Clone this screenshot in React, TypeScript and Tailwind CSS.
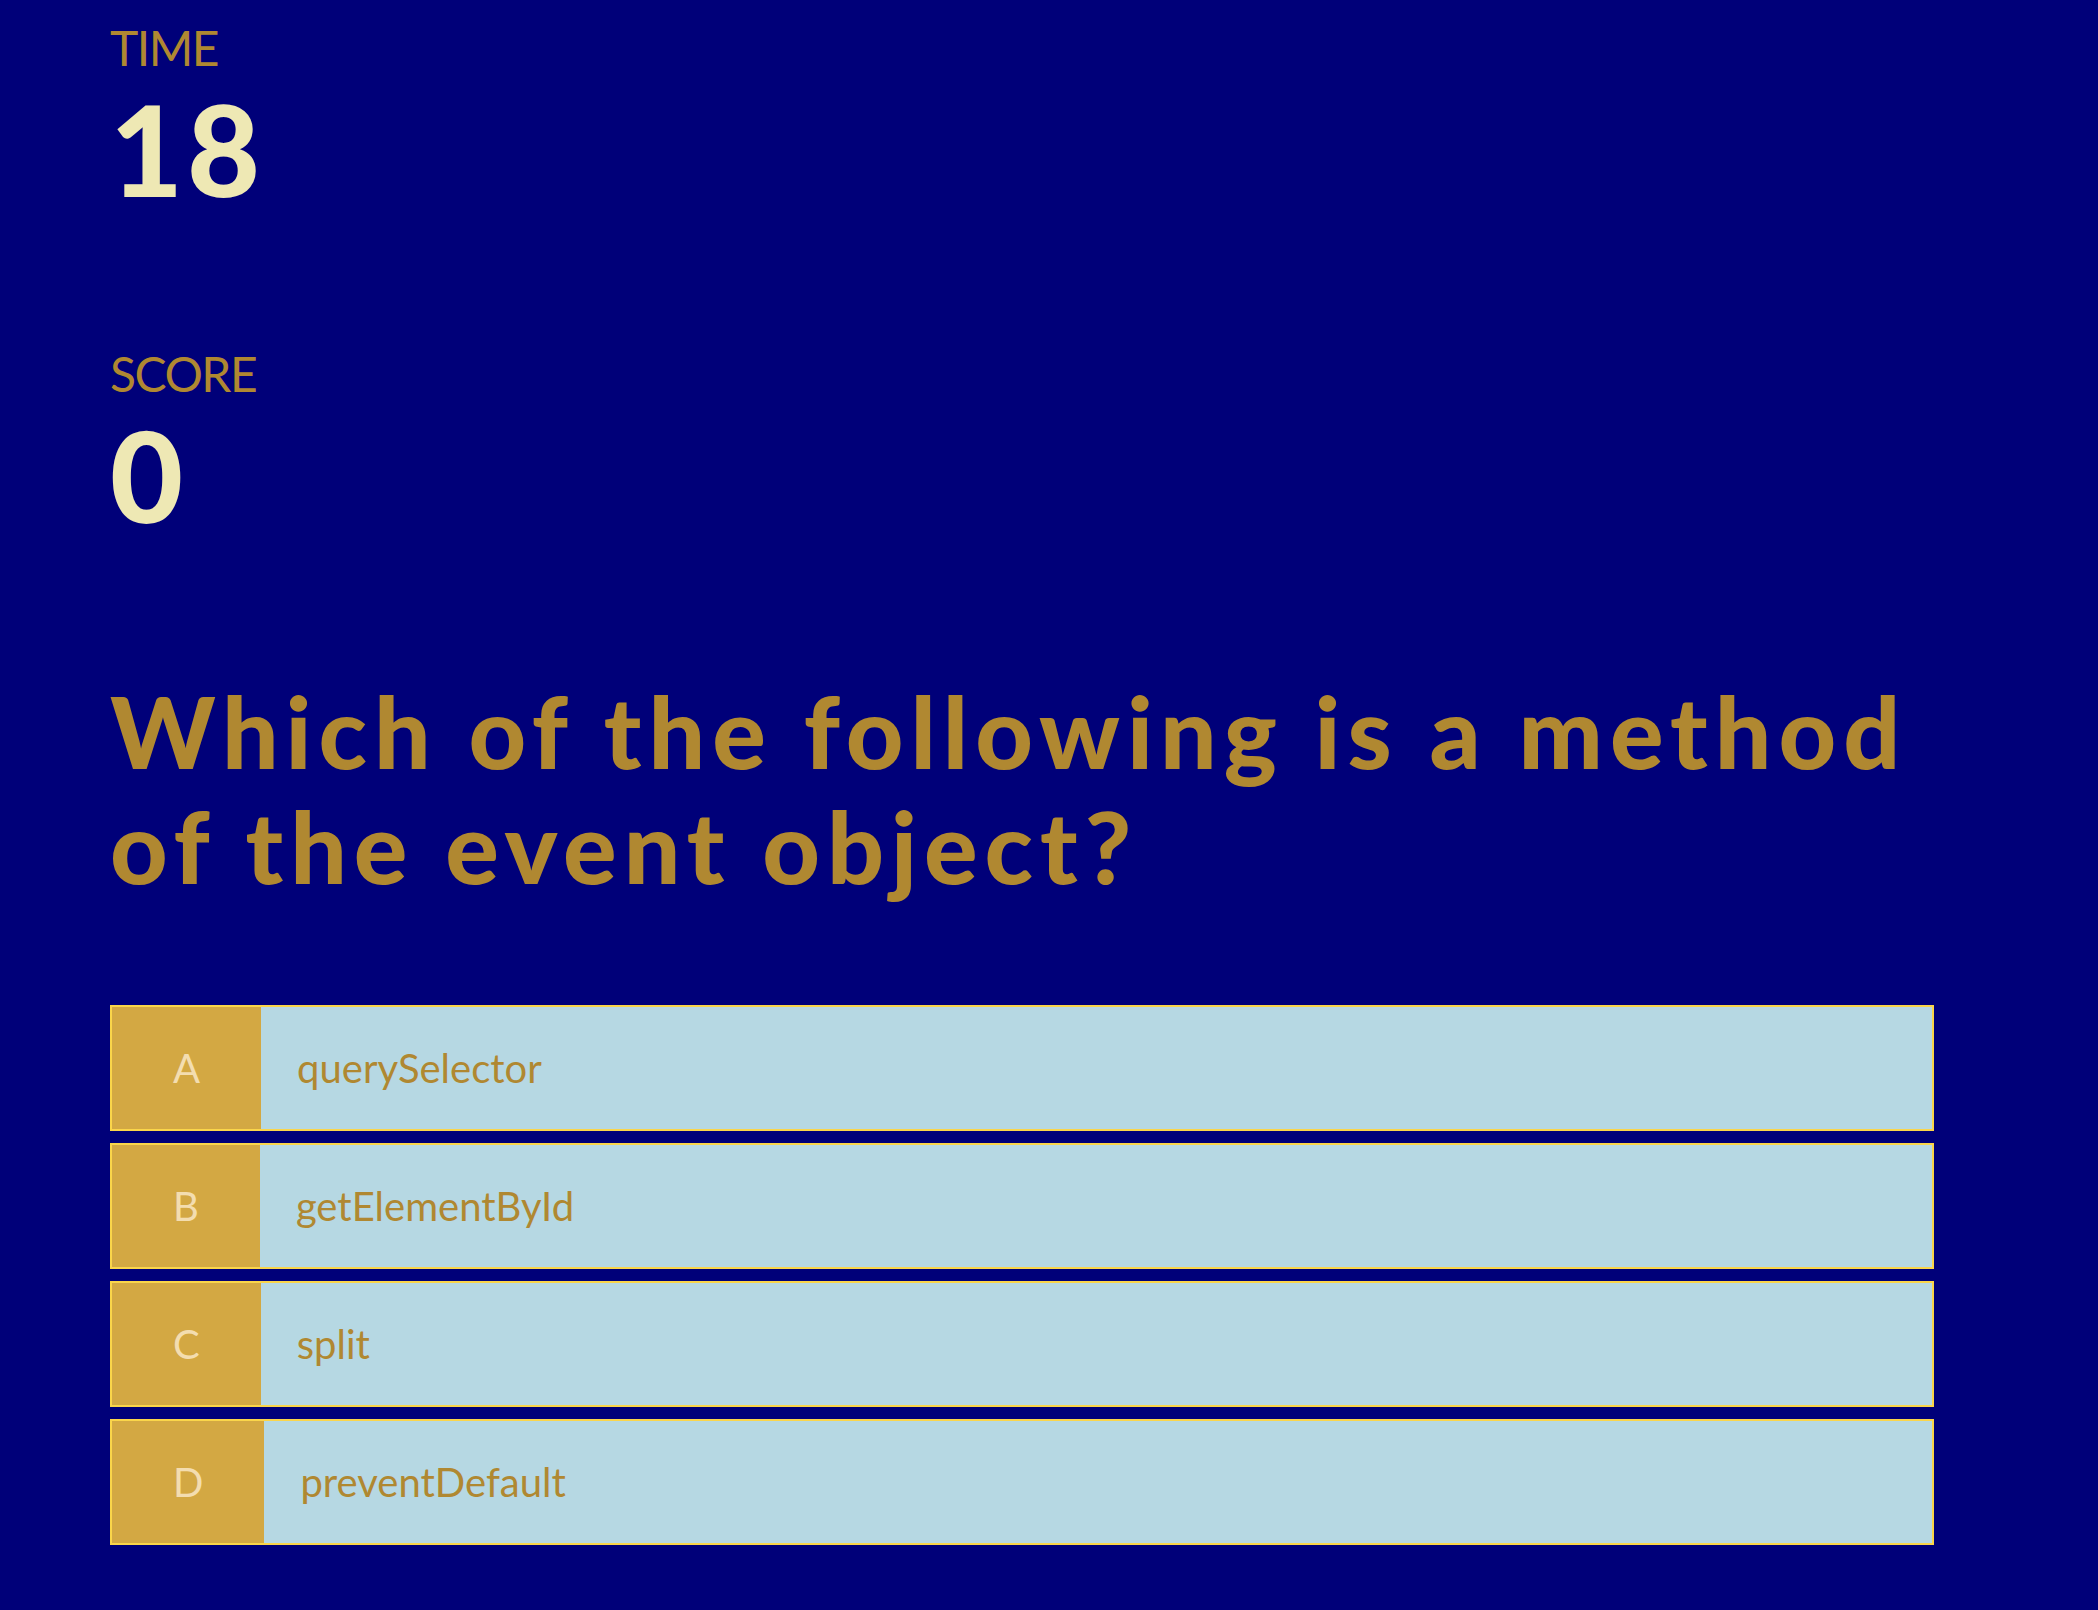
const options = [
  { letter: 'A', text: 'querySelector' },
  { letter: 'B', text: 'getElementById' },
  { letter: 'C', text: 'split' },
  { letter: 'D', text: 'preventDefault' },
]

export default function App() {
  return (
    <main
      className="min-h-screen bg-[#000079] pl-[110px] pr-[164px] pt-[24px] pb-[60px]"
      style={{ fontFamily: 'Lato, "Open Sans", sans-serif' }}
    >
      <section>
        <h3 className="text-[48px] leading-none tracking-[-1.5px] text-[#b08831]">TIME</h3>
        <p className="mt-[14px] text-[126px] leading-none font-black tracking-[4px] text-[#eee8b4]">18</p>
      </section>

      <section className="mt-[138px]">
        <h3 className="text-[48px] leading-none tracking-[-1.5px] text-[#b08831]">SCORE</h3>
        <p className="mt-[14px] text-[126px] leading-none font-black text-[#eee8b4]">0</p>
      </section>

      <h1 className="mt-[135px] text-[100px] leading-[115px] font-black tracking-[7px] text-[#b08831]">
        Which of the following is a method of the event object?
      </h1>

      <ul className="mt-[102px] flex flex-col gap-[12px]">
        {options.map((o) => (
          <li
            key={o.letter}
            className="flex h-[126px] border-2 border-[#fad54a] bg-[#b6d8e3] text-[40px]"
          >
            <span className="flex items-center px-[61px] bg-[#d3a843] text-[#f3ddb0]">{o.letter}</span>
            <span className="flex items-center pl-[36px] text-[#b08831]">{o.text}</span>
          </li>
        ))}
      </ul>
    </main>
  )
}
